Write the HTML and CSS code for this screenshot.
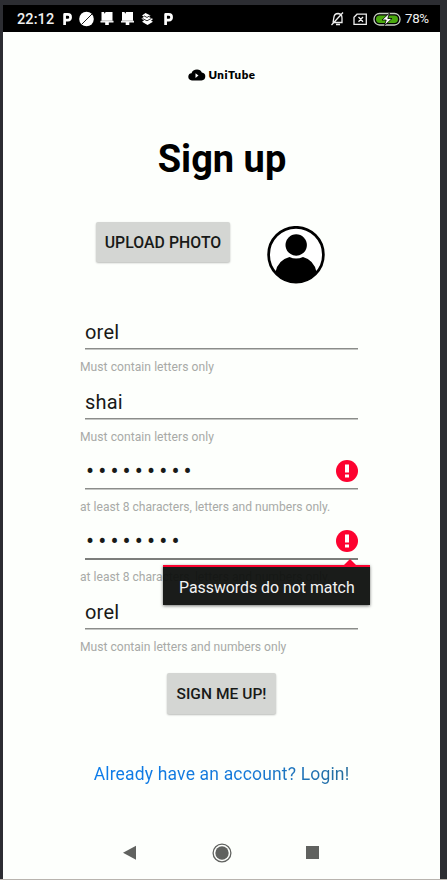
FILE: index.html
```html
<!DOCTYPE html>
<html lang="en">
<head>
<meta charset="utf-8">
<title>UniTube sign up</title>
<link rel="stylesheet" href="styles.css">
</head>
<body>
<div class="phone">
  <header class="status">
    <span class="clock">22:12</span>
    <svg class="notices" width="114" height="16" viewBox="0 0 114 16" fill="#fff">
      <path id="park" fill="none" stroke="#fff" stroke-width="2.700" stroke-linejoin="round" d="M2.600 14V3.400H5.800Q8.600 3.400 8.600 6.200T5.800 9.200H3.500"/>
      <circle cx="24.500" cy="8" r="7.300"/><path d="M19.500 13.500L31 2" stroke="#000" stroke-width=".9"/>
      <path id="bell" d="M39.500 1H42L42.700 2.800 43.600 1H50.500V10H51.500V11.500H46.800V14H43.200V11.500H38.500V10H39.500Z"/>
      <path d="M38.500 9.800H51.500" stroke="#888" stroke-width=".6"/>
      <use href="#bell" x="20.500"/><path d="M59 9.800H72" stroke="#888" stroke-width=".6"/>
      <path d="M83.500 2L88.500 4.500 87 6 91 8 89 9.700 91 10.700 85.500 14 80 10.700 82 9.500 79.500 7.500 82 5.800 80 4.500Z"/>
      <path d="M80.500 7.500L85 9.800 89.500 7.300M82 4.800L85 6.500 87.500 4.800" stroke="#000" stroke-width=".8" fill="none"/>
      <use href="#park" x="101"/>
    </svg>
    <svg class="system" width="72" height="16" viewBox="0 0 72 16" fill="none" stroke="#eee" stroke-width="1.300">
      <path d="M3 11.500H12V7Q12 3 8.200 2.500 4 2.600 3.800 7L3 11.500M6 13.500H10M1.500 14L13 1.500"/>
      <path d="M27 3.200H36.300V13.300H24V6.200ZM28.500 6L33 10.700M33 6L28.500 10.700"/>
      <rect x="44" y="2.500" width="26" height="11.500" rx="5.500" stroke="#c8d0c4"/>
      <rect x="46" y="4.500" width="22" height="7.500" rx="3.700" fill="#48a80c" stroke="none"/>
      <path d="M59.500 2L52 9H56.200L54.500 14.500 62 7.500H57.800Z" fill="#fff" stroke="#000" stroke-width=".8"/>
    </svg>
    <span class="percent">78%</span>
  </header>

  <main class="screen">
    <div class="brand">
      <svg width="18" height="12" viewBox="0 0 18 12"><path d="M4 11.500Q.3 11 .3 7.800.3 4.600 3.500 4.200 4.700.5 9 .5 12.700.5 13.800 3.500 17.300 3.900 17.300 7.300 17.300 11 13.500 11.500Z"/><path d="M7.500 4.300V9L10.500 6.600Z" fill="#fff"/></svg>
      <span>UniTube</span>
    </div>
    <h1 class="title">Sign up</h1>
    <div class="photo-row">
      <button class="btn upload">UPLOAD PHOTO</button>
      <svg width="58" height="58" viewBox="0 0 58 58"><defs><clipPath id="disc"><circle cx="29" cy="28.700" r="28"/></clipPath></defs><circle cx="29" cy="28.700" r="27.400" fill="#fff" stroke="#000" stroke-width="2.700"/><circle cx="29.200" cy="19" r="10.700"/><path clip-path="url(#disc)" d="M8.500 58V46Q11 34 22.500 31 29 34 36 31 47 34 49.500 46V58Z"/></svg>
    </div>

    <form class="fields">
      <div class="field"><div class="input">orel</div><p class="hint wide">Must contain letters only</p></div>
      <div class="field"><div class="input">shai</div><p class="hint wide">Must contain letters only</p></div>
      <div class="field">
        <div class="input secret"><span>•••••••••</span>
          <svg width="22" height="22" viewBox="0 0 22 22"><circle cx="11" cy="11" r="11" fill="#fd0330"/><path d="M9 4.500H13V12.500H9ZM9 14.500H13V17.500H9Z" fill="#fff"/></svg></div>
        <p class="hint">at least 8 characters, letters and numbers only.</p>
      </div>
      <div class="field">
        <div class="input secret active"><span>••••••••</span>
          <svg width="22" height="22" viewBox="0 0 22 22"><circle cx="11" cy="11" r="11" fill="#fd0330"/><path d="M9 4.500H13V12.500H9ZM9 14.500H13V17.500H9Z" fill="#fff"/></svg></div>
        <p class="hint">at least 8 characters, letters and numbers only.</p>
        <div class="error">Passwords do not match</div>
      </div>
      <div class="field"><div class="input">orel</div><p class="hint">Must contain letters and numbers only</p></div>
    </form>

    <button class="btn submit">SIGN ME UP!</button>
    <a class="login"><span>Already have an account? Login!</span></a>
  </main>

  <nav class="nav">
    <svg width="14" height="16" viewBox="0 0 14 16"><path d="M0 7.700L13 .8V14.700Z"/></svg>
    <svg width="20" height="20" viewBox="0 0 20 20"><circle cx="10" cy="10" r="8.900" fill="none" stroke="#60625f" stroke-width="1.300"/><circle cx="10" cy="10" r="6.700"/></svg>
    <svg width="13" height="13" viewBox="0 0 13 13"><path d="M0 0H13V13H0Z"/></svg>
  </nav>
</div>
</body>
</html>
```
FILE: styles.css
```css
* { box-sizing: border-box; }
body {
  margin: 0;
  height: 880px;
  padding: 5px 7px 0 3px;
  background: #2c2d32;
  border-bottom: 1px solid #b8b4ae;
  font-family: Roboto, sans-serif;
  color: #181a18;
  overflow: hidden;
}
svg { display: block; flex: none; }
.phone { height: 874px; display: flex; flex-direction: column; background: #fdfffc; }
.status { height: 27px; flex: none; background: #000; color: #f0f0f0; display: flex; align-items: center; padding: 0 11px 0 14px; }
.clock { width: 44px; padding-top: 2px; font-size: 14.5px; font-weight: 500; letter-spacing: .1px; white-space: nowrap; }
.notices { margin-left: 1px; }
.system { margin-left: auto; }
.percent { width: 24px; margin-left: 3px; font-size: 13.3px; letter-spacing: -.3px; white-space: nowrap; }
.screen { flex: 1; display: flex; flex-direction: column; align-items: center; }
.brand { display: flex; align-items: center; gap: 2px; height: 14px; margin: 36px 0 0 1px; color: #000; font: 800 11.5px/14px Lato, sans-serif; letter-spacing: .55px; }
.title { margin: 54px 0 0 1px; height: 46px; color: #000; font-size: 38px; line-height: 46px; font-weight: 700; white-space: nowrap; }
.photo-row { display: flex; gap: 37px; width: 251px; margin: 40px 0 0 -1px; height: 64px; }
.photo-row svg { margin-top: 4px; }
.btn { border: 0; padding: 0; height: 40px; border-radius: 2px; background: #d4d6d3; box-shadow: 0 1px 2px #0004; color: #181a18; font: 500 15.8px/38px Roboto, sans-serif; letter-spacing: .05px; white-space: nowrap; flex: none; }
.upload { width: 134px; padding: 2px 0 0 1px; }
.submit { width: 109px; margin-top: 9px; height: 41px; font-size: 15.5px; }
.fields { width: 278px; margin: 28px 5px 0 0; }
.field { height: 70px; position: relative; }
.input { height: 35px; margin-left: 5px; padding-top: 2px; box-shadow: 0 .5px 0 #8b8d8a; border-bottom: 1px solid #8b8d8a; font-size: 20px; line-height: 35px; letter-spacing: .2px; display: flex; align-items: center; justify-content: space-between; }
.hint { margin: 0; height: 35px; font-size: 12.1px; line-height: 36px; color: #a8aaa7; white-space: nowrap; }
.wide { letter-spacing: .05px; }
.secret { padding-top: 0; }
.secret span { padding: 1px 0 0 1px; font-size: 24px; letter-spacing: 4.1px; }
.active { height: 36px; border-bottom: 2px solid #7c7e7b; box-shadow: none; }
.active + .hint { margin-top: -1px; }
.error { position: absolute; right: -12px; top: 41px; width: 207px; height: 40px; border-top: 2px solid #fd0330; background: rgba(14, 16, 14, .95); color: #f3f3f3; padding-left: 16px; font-size: 15.85px; line-height: 41px; white-space: nowrap; box-shadow: 0 1px 3px #0008; z-index: 1; }
.error::before { content: ""; position: absolute; right: 14px; top: -8px; border: 6px solid transparent; border-top: 0; border-bottom-color: #fd0330; }
.login { margin-top: 48px; font-size: 17.5px; letter-spacing: .17px; line-height: 25px; white-space: nowrap; }
.login span { color: transparent; background: linear-gradient(90deg, #0b7bea, #1679d8 60%, #256d9c); background-clip: text; }
.nav { height: 54px; flex: none; display: flex; align-items: center; justify-content: space-between; padding: 1px 121px 0 120px; fill: #60625f; }
```
